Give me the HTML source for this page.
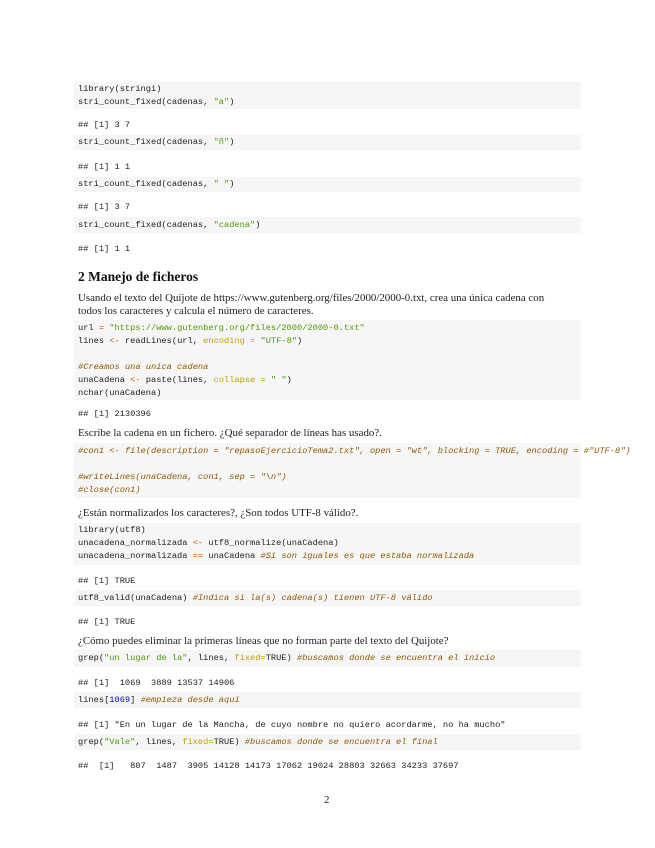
<!DOCTYPE html>
<html><head><meta charset="utf-8"><style>
body{margin:0;width:655px;height:848px;background:#fff;position:relative;overflow:hidden;color:#111}
.b{position:absolute;left:74px;width:507px;background:#f6f6f6}
.c,.t{position:absolute;left:78px;white-space:pre;line-height:13px;height:13px}
.c{font-family:"Liberation Mono",monospace;font-size:8.7px;color:#222}
.t{font-family:"Liberation Serif",serif;font-size:10.9px;color:#222}
.s{color:#4e9a06}.k{color:#c4a000}.m{color:#8f5902;font-style:italic}.n{color:#0000cf}.o{color:#ce5c00}
h2{position:absolute;left:78px;top:269px;margin:0;font-family:"Liberation Serif",serif;font-size:13.5px;font-weight:bold;line-height:16px}
</style></head><body>
<div class="b" style="top:82px;height:27px"></div>
<div class="c" style="top:83px">library(stringi)</div>
<div class="c" style="top:96px">stri_count_fixed(cadenas, <span class="s">"a"</span>)</div>
<div class="c" style="top:119px">## [1] 3 7</div>
<div class="b" style="top:135px;height:15px"></div>
<div class="c" style="top:136px">stri_count_fixed(cadenas, <span class="s">"ñ"</span>)</div>
<div class="c" style="top:161px">## [1] 1 1</div>
<div class="b" style="top:177px;height:15px"></div>
<div class="c" style="top:178px">stri_count_fixed(cadenas, <span class="s">" "</span>)</div>
<div class="c" style="top:201px">## [1] 3 7</div>
<div class="b" style="top:217px;height:16px"></div>
<div class="c" style="top:219px">stri_count_fixed(cadenas, <span class="s">"cadena"</span>)</div>
<div class="c" style="top:243px">## [1] 1 1</div>
<h2>2 Manejo de ficheros</h2>
<div class="t" style="top:292px">Usando el texto del Quijote de https://www.gutenberg.org/files/2000/2000-0.txt, crea una única cadena con</div>
<div class="t" style="top:305px">todos los caracteres y calcula el número de caracteres.</div>
<div class="b" style="top:320px;height:80px"></div>
<div class="c" style="top:322px">url <span class="o">=</span> <span class="s">"https://www.gutenberg.org/files/2000/2000-0.txt"</span></div>
<div class="c" style="top:335px">lines <span class="o">&lt;-</span> readLines(url, <span class="k">encoding =</span> <span class="s">"UTF-8"</span>)</div>
<div class="c" style="top:361px"><span class="m">#Creamos una unica cadena</span></div>
<div class="c" style="top:374px">unaCadena <span class="o">&lt;-</span> paste(lines, <span class="k">collapse =</span> <span class="s">" "</span>)</div>
<div class="c" style="top:387px">nchar(unaCadena)</div>
<div class="c" style="top:408px">## [1] 2130396</div>
<div class="t" style="top:427px">Escribe la cadena en un fichero. ¿Qué separador de líneas has usado?.</div>
<div class="b" style="top:443px;height:55px"></div>
<div class="c" style="top:445px"><span class="m">#con1 &lt;- file(description = "repasoEjercicioTema2.txt", open = "wt", blocking = TRUE, encoding = #"UTF-8")</span></div>
<div class="c" style="top:471px"><span class="m">#writeLines(unaCadena, con1, sep = "\n")</span></div>
<div class="c" style="top:484px"><span class="m">#close(con1)</span></div>
<div class="t" style="top:507px">¿Están normalizados los caracteres?, ¿Son todos UTF-8 válido?.</div>
<div class="b" style="top:523px;height:42px"></div>
<div class="c" style="top:524px">library(utf8)</div>
<div class="c" style="top:537px">unacadena_normalizada <span class="o">&lt;-</span> utf8_normalize(unaCadena)</div>
<div class="c" style="top:550px">unacadena_normalizada <span class="o">==</span> unaCadena <span class="m">#Si son iguales es que estaba normalizada</span></div>
<div class="c" style="top:575px">## [1] TRUE</div>
<div class="b" style="top:590px;height:16px"></div>
<div class="c" style="top:592px">utf8_valid(unaCadena) <span class="m">#Indica si la(s) cadena(s) tienen UTF-8 válido</span></div>
<div class="c" style="top:616px">## [1] TRUE</div>
<div class="t" style="top:635px">¿Cómo puedes eliminar la primeras líneas que no forman parte del texto del Quijote?</div>
<div class="b" style="top:650px;height:17px"></div>
<div class="c" style="top:652px">grep(<span class="s">"un lugar de la"</span>, lines, <span class="k">fixed=</span>TRUE) <span class="m">#buscamos donde se encuentra el inicio</span></div>
<div class="c" style="top:677px">## [1]  1069  3889 13537 14906</div>
<div class="b" style="top:692px;height:16px"></div>
<div class="c" style="top:694px">lines[<span class="n">1069</span>] <span class="m">#empieza desde aquí</span></div>
<div class="c" style="top:719px">## [1] "En un lugar de la Mancha, de cuyo nombre no quiero acordarme, no ha mucho"</div>
<div class="b" style="top:734px;height:16px"></div>
<div class="c" style="top:736px">grep(<span class="s">"Vale"</span>, lines, <span class="k">fixed=</span>TRUE) <span class="m">#buscamos donde se encuentra el final</span></div>
<div class="c" style="top:760px">##  [1]   807  1487  3905 14128 14173 17062 19024 28803 32663 34233 37697</div>
<div class="t" style="top:794px;left:324px">2</div>
</body></html>
